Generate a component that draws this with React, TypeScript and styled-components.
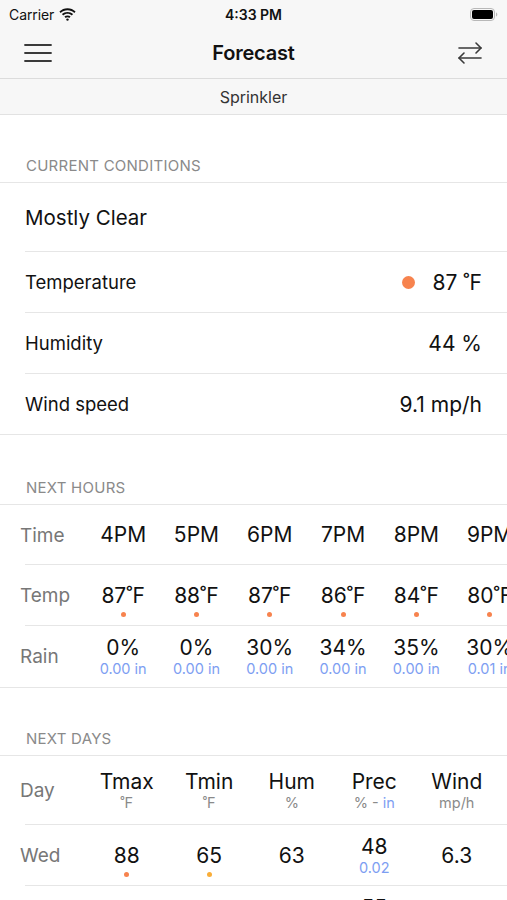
import React from "react";
import styled, { createGlobalStyle } from "styled-components";

const Global = createGlobalStyle`
  html, body { margin: 0; padding: 0; background: #ffffff; }
  body { font-family: Inter, "Noto Sans", "Liberation Sans", sans-serif; color: #111; -webkit-font-smoothing: antialiased; }
  * { box-sizing: border-box; }
`;

const Screen = styled.div`
  width: 507px;
  height: 900px;
  overflow: hidden;
  background: #fff;
`;

const TopArea = styled.div`
  background: #f7f7f7;
  border-bottom: 1.5px solid #dcdcdc;
`;

const StatusBar = styled.div`
  height: 28px;
  display: grid;
  grid-template-columns: 1fr auto 1fr;
  align-items: center;
  padding: 0 9px;
  font-size: 14px;
  color: #111;
`;

const StatusLeft = styled.div`
  display: flex;
  align-items: center;
  gap: 5px;
  letter-spacing: -0.1px;
`;

const StatusTime = styled.div`
  font-weight: 600;
  font-size: 14px;
`;

const StatusRight = styled.div`
  display: flex;
  justify-content: flex-end;
`;

const NavBar = styled.div`
  height: 50px;
  display: grid;
  grid-template-columns: 80px 1fr 80px;
  align-items: center;
`;

const NavTitle = styled.div`
  text-align: center;
  font-size: 20px;
  font-weight: 600;
  letter-spacing: -0.2px;
`;

const NavButton = styled.div<{ $right?: boolean }>`
  display: flex;
  justify-content: ${(p) => (p.$right ? "flex-end" : "flex-start")};
  padding: ${(p) => (p.$right ? "0 24px 0 0" : "0 0 0 24px")};
  color: #333;
`;

const SubBar = styled.div`
  height: 36px;
  background: #f7f7f7;
  border-bottom: 1.5px solid #e2e2e2;
  display: flex;
  align-items: center;
  justify-content: center;
  font-size: 16px;
  color: #333;
`;

const SectionHeader = styled.div<{ $h: number }>`
  height: ${(p) => p.$h}px;
  display: flex;
  align-items: flex-end;
  padding: 0 0 7px 26px;
  font-size: 15px;
  color: #8a8a8a;
  letter-spacing: 0.25px;
  border-bottom: 1px solid #e6e6e6;
`;

const Group = styled.div`
  border-bottom: 1px solid #e6e6e6;
`;

const Row = styled.div<{ $h: number; $last?: boolean }>`
  height: ${(p) => p.$h}px;
  margin-left: 25px;
  padding-right: 25px;
  display: flex;
  align-items: center;
  justify-content: space-between;
  border-bottom: ${(p) => (p.$last ? "none" : "1px solid #e6e6e6")};
`;

const BigText = styled.div`
  font-size: 20.5px;
  color: #111;
`;

const Label = styled.div`
  font-size: 18.5px;
  color: #111;
`;

const Value = styled.div`
  font-size: 21px;
  color: #111;
  display: flex;
  align-items: center;
  gap: 18px;
`;

const Dot = styled.span<{ $size: number; $color: string }>`
  display: inline-block;
  width: ${(p) => p.$size}px;
  height: ${(p) => p.$size}px;
  border-radius: 50%;
  background: ${(p) => p.$color};
`;

const TableRow = styled.div<{ $h: number; $last?: boolean; $cols: string }>`
  height: ${(p) => p.$h}px;
  display: grid;
  grid-template-columns: ${(p) => p.$cols};
  align-items: center;
  position: relative;
  white-space: nowrap;
  &::after {
    content: "";
    display: ${(p) => (p.$last ? "none" : "block")};
    position: absolute;
    left: 25px;
    right: 0;
    bottom: 0;
    height: 1px;
    background: #e6e6e6;
  }
`;

const RowLabel = styled.div`
  padding-left: 20px;
  font-size: 19px;
  color: #777;
`;

const Cell = styled.div`
  display: flex;
  flex-direction: column;
  align-items: center;
  justify-content: center;
`;

const CellMain = styled.div`
  font-size: 21px;
  color: #111;
  line-height: 24px;
`;

const CellSub = styled.div<{ $blue?: boolean }>`
  font-size: 14.5px;
  line-height: 18px;
  color: ${(p) => (p.$blue ? "#7d9ef2" : "#8a8a8a")};
`;

const Blue = styled.span`
  color: #7d9ef2;
`;

const DotSlot = styled.div`
  height: 14px;
  display: flex;
  align-items: center;
  justify-content: center;
`;

const HourTable = styled.div`
  border-bottom: 1px solid #e6e6e6;
  overflow: hidden;
`;

const hours = [
  { t: "4PM", temp: "87˚F", rain: "0%", amt: "0.00 in" },
  { t: "5PM", temp: "88˚F", rain: "0%", amt: "0.00 in" },
  { t: "6PM", temp: "87˚F", rain: "30%", amt: "0.00 in" },
  { t: "7PM", temp: "86˚F", rain: "34%", amt: "0.00 in" },
  { t: "8PM", temp: "84˚F", rain: "35%", amt: "0.00 in" },
  { t: "9PM", temp: "80˚F", rain: "30%", amt: "0.01 in" },
];

const hourCols = "86.5px repeat(6, 73.3px)";
const dayCols = "85.5px repeat(5, 82.5px)";

const Hamburger = () => (
  <svg width="28" height="20" viewBox="0 0 28 20">
    <g stroke="#3a3a3a" strokeWidth="1.8" strokeLinecap="round">
      <line x1="1" y1="2" x2="27" y2="2" />
      <line x1="1" y1="10" x2="27" y2="10" />
      <line x1="1" y1="18" x2="27" y2="18" />
    </g>
  </svg>
);

const Swap = () => (
  <svg width="26" height="24" viewBox="0 0 26 24" fill="none">
    <g stroke="#3a3a3a" strokeWidth="1.6" strokeLinecap="round" strokeLinejoin="round">
      <line x1="2" y1="7" x2="24" y2="7" />
      <polyline points="19,2 24,7 19,12" />
      <line x1="2" y1="17" x2="24" y2="17" />
      <polyline points="7,12 2,17 7,22" />
    </g>
  </svg>
);

const Wifi = () => (
  <svg width="17" height="13" viewBox="0 0 17 13">
    <path d="M8.5 2.2c2.6 0 5 1 6.8 2.7l1.3-1.4C14.4 1.4 11.6.2 8.5.2S2.6 1.4.4 3.5l1.3 1.4C3.5 3.2 5.9 2.2 8.5 2.2z" fill="#111" />
    <path d="M8.5 5.8c1.6 0 3.1.6 4.3 1.7l1.3-1.4C12.6 4.7 10.6 3.9 8.5 3.9S4.4 4.7 2.9 6.1l1.3 1.4c1.2-1.1 2.7-1.7 4.3-1.7z" fill="#111" />
    <path d="M8.5 9.3c.7 0 1.3.3 1.8.7l1.3-1.4c-.8-.8-1.900-1.2-3.1-1.2s-2.3.4-3.1 1.2l1.3 1.4c.5-.4 1.1-.7 1.8-.7z" fill="#111" />
    <circle cx="8.5" cy="11.6" r="1.2" fill="#111" />
  </svg>
);

const Battery = () => (
  <svg width="28" height="13" viewBox="0 0 28 13">
    <rect x="0.5" y="0.5" width="24" height="12" rx="3.5" fill="none" stroke="#b8b8b8" />
    <rect x="2" y="2" width="21" height="9" rx="2" fill="#000" />
    <path d="M26 4.5v4c.8-.3 1.3-1.1 1.3-2s-.5-1.7-1.3-2z" fill="#b8b8b8" />
  </svg>
);

export default function App() {
  return (
    <Screen>
      <Global />
      <TopArea>
        <StatusBar>
          <StatusLeft>
            <span>Carrier</span>
            <Wifi />
          </StatusLeft>
          <StatusTime>4:33 PM</StatusTime>
          <StatusRight>
            <Battery />
          </StatusRight>
        </StatusBar>
        <NavBar>
          <NavButton>
            <Hamburger />
          </NavButton>
          <NavTitle>Forecast</NavTitle>
          <NavButton $right>
            <Swap />
          </NavButton>
        </NavBar>
      </TopArea>
      <SubBar>Sprinkler</SubBar>

      <SectionHeader $h={68}>CURRENT CONDITIONS</SectionHeader>
      <Group>
        <Row $h={69}>
          <BigText>Mostly Clear</BigText>
        </Row>
        <Row $h={61}>
          <Label>Temperature</Label>
          <Value>
            <Dot $size={13} $color="#f7834e" />
            <span>87 ˚F</span>
          </Value>
        </Row>
        <Row $h={61}>
          <Label>Humidity</Label>
          <Value>44 %</Value>
        </Row>
        <Row $h={60} $last>
          <Label>Wind speed</Label>
          <Value>9.1 mp/h</Value>
        </Row>
      </Group>

      <SectionHeader $h={70}>NEXT HOURS</SectionHeader>
      <HourTable>
        <TableRow $h={60} $cols={hourCols}>
          <RowLabel>Time</RowLabel>
          {hours.map((h) => (
            <Cell key={h.t}>
              <CellMain>{h.t}</CellMain>
            </Cell>
          ))}
        </TableRow>
        <TableRow $h={61} $cols={hourCols}>
          <RowLabel>Temp</RowLabel>
          {hours.map((h) => (
            <Cell key={h.t}>
              <DotSlot />
              <CellMain>{h.temp}</CellMain>
              <DotSlot>
                <Dot $size={5} $color="#f7834e" />
              </DotSlot>
            </Cell>
          ))}
        </TableRow>
        <TableRow $h={61} $last $cols={hourCols}>
          <RowLabel>Rain</RowLabel>
          {hours.map((h) => (
            <Cell key={h.t}>
              <CellMain>{h.rain}</CellMain>
              <CellSub $blue>{h.amt}</CellSub>
            </Cell>
          ))}
        </TableRow>
      </HourTable>

      <SectionHeader $h={68}>NEXT DAYS</SectionHeader>
      <div>
        <TableRow $h={69} $cols={dayCols}>
          <RowLabel>Day</RowLabel>
          <Cell>
            <CellMain>Tmax</CellMain>
            <CellSub>˚F</CellSub>
          </Cell>
          <Cell>
            <CellMain>Tmin</CellMain>
            <CellSub>˚F</CellSub>
          </Cell>
          <Cell>
            <CellMain>Hum</CellMain>
            <CellSub>%</CellSub>
          </Cell>
          <Cell>
            <CellMain>Prec</CellMain>
            <CellSub>
              % - <Blue>in</Blue>
            </CellSub>
          </Cell>
          <Cell>
            <CellMain>Wind</CellMain>
            <CellSub>mp/h</CellSub>
          </Cell>
        </TableRow>
        <TableRow $h={61} $cols={dayCols}>
          <RowLabel>Wed</RowLabel>
          <Cell>
            <DotSlot />
            <CellMain>88</CellMain>
            <DotSlot>
              <Dot $size={5} $color="#f7834e" />
            </DotSlot>
          </Cell>
          <Cell>
            <DotSlot />
            <CellMain>65</CellMain>
            <DotSlot>
              <Dot $size={5} $color="#f9ad38" />
            </DotSlot>
          </Cell>
          <Cell>
            <CellMain>63</CellMain>
          </Cell>
          <Cell>
            <CellMain>48</CellMain>
            <CellSub $blue>0.02</CellSub>
          </Cell>
          <Cell>
            <CellMain>6.3</CellMain>
          </Cell>
        </TableRow>
        <TableRow $h={61} $cols={dayCols}>
          <RowLabel>Thu</RowLabel>
          <Cell>
            <CellMain>89</CellMain>
          </Cell>
          <Cell>
            <CellMain>66</CellMain>
          </Cell>
          <Cell>
            <CellMain>60</CellMain>
          </Cell>
          <Cell>
            <CellMain>55</CellMain>
            <CellSub $blue>0.03</CellSub>
          </Cell>
          <Cell>
            <CellMain>7.1</CellMain>
          </Cell>
        </TableRow>
      </div>
    </Screen>
  );
}
